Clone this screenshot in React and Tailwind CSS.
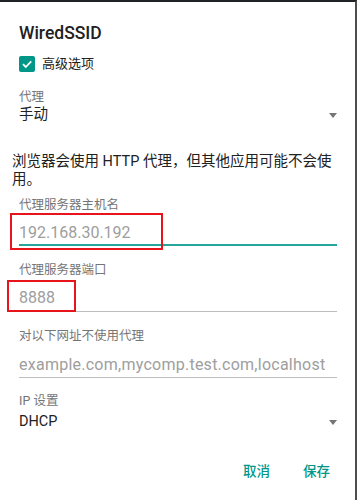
export default function App() {
  const font = { fontFamily: 'Roboto, "Noto Sans CJK SC", sans-serif' };

  const Arrow = () => (
    <svg width="8" height="5" viewBox="0 0 8 5" className="shrink-0">
      <path d="M0 0 L8 0 L4 5 Z" fill="#757575" />
    </svg>
  );

  return (
    <div
      className="relative w-[357px] h-[500px] bg-white overflow-hidden border-t-2 border-r-2 border-t-[#1f2326] border-r-[#4d4d4d]"
      style={font}
    >
      <div className="flex flex-col pl-[19px] pr-[18px]">
        {/* title */}
        <div className="mt-[19px] h-6 shrink-0 text-[17.5px] leading-6 font-medium text-[#212121]">WiredSSID</div>

        {/* advanced options */}
        <div className="mt-[11px] flex items-center gap-[7px] h-4 shrink-0">
          <div className="w-4 h-4 rounded-[2px] bg-[#009688] flex items-center justify-center">
            <svg width="12" height="12" viewBox="0 0 12 12">
              <path d="M2 6.2 L4.8 9 L10.2 3.4" stroke="white" strokeWidth="1.8" fill="none" />
            </svg>
          </div>
          <span className="text-[13px] leading-4 text-[#212121]">高级选项</span>
        </div>

        {/* proxy */}
        <div className="mt-[17px] h-4 shrink-0 text-[12.5px] leading-4 text-[#757575]">代理</div>
        <div className="mt-0 h-5 shrink-0 flex items-center justify-between">
          <span className="text-[14.5px] leading-5 text-[#212121]">手动</span>
          <Arrow />
        </div>

        {/* note */}
        <p className="mt-[28px] ml-[-7px] w-[330px] h-9 shrink-0 text-[14.5px] leading-[18px] text-[#212121]">
          浏览器会使用 HTTP 代理，但其他应用可能不会使用。
        </p>

        {/* hostname */}
        <div className="mt-[8px] h-4 shrink-0 text-[12.5px] leading-4 text-[#757575]">代理服务器主机名</div>
        <div className="mt-[10px] h-5 shrink-0 text-[16px] leading-5 text-[#9e9e9e]">192.168.30.192</div>
        <div className="mt-[1px] h-[2px] shrink-0 bg-[#26a69a]" />

        {/* port */}
        <div className="mt-[16px] h-4 shrink-0 text-[12.5px] leading-4 text-[#757575]">代理服务器端口</div>
        <div className="mt-[10px] h-5 shrink-0 text-[16px] leading-5 text-[#9e9e9e]">8888</div>
        <div className="mt-[3px] h-px shrink-0 bg-[#bdbdbd]" />

        {/* bypass */}
        <div className="mt-[16px] h-4 shrink-0 text-[12.5px] leading-4 text-[#757575]">对以下网址不使用代理</div>
        <div className="mt-[11px] h-5 shrink-0 text-[16px] leading-5 tracking-[0.25px] text-[#9e9e9e] whitespace-nowrap">
          example.com,mycomp.test.com,localhost
        </div>
        <div className="mt-[2px] h-px shrink-0 bg-[#bdbdbd]" />

        {/* ip settings */}
        <div className="mt-[15px] h-4 shrink-0 text-[12.5px] leading-4 text-[#757575]">IP 设置</div>
        <div className="mt-[3px] h-5 shrink-0 flex items-center justify-between">
          <span className="text-[14.5px] leading-5 text-[#212121]">DHCP</span>
          <Arrow />
        </div>

        {/* actions */}
        <div className="mt-[29px] h-5 shrink-0 flex justify-end gap-[33px] pr-[7px]">
          <button className="text-[13.5px] leading-5 font-medium text-[#009688]">取消</button>
          <button className="text-[13.5px] leading-5 font-medium text-[#009688]">保存</button>
        </div>
      </div>

      {/* annotation boxes */}
      <div className="absolute left-[10px] top-[211px] w-[153px] h-[37px] border-2 border-[#e8141c]" />
      <div className="absolute left-[7px] top-[278px] w-[69px] h-[32px] border-2 border-[#e8141c]" />
    </div>
  );
}
